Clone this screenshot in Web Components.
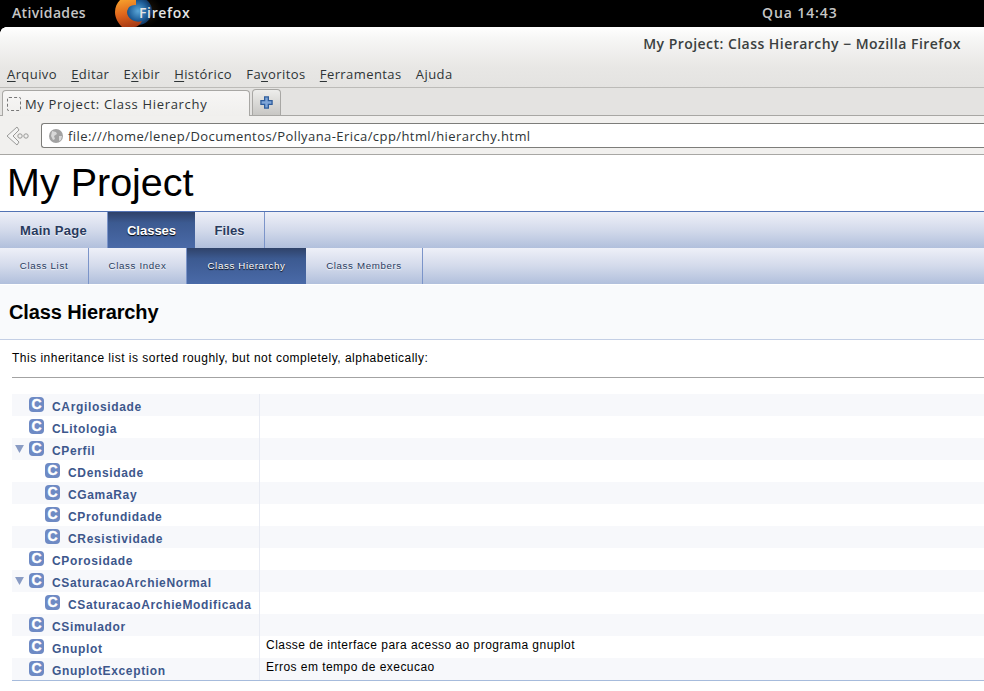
<!DOCTYPE html>
<html><head><meta charset="utf-8"><title>My Project: Class Hierarchy</title>
<style>
html,body{margin:0;padding:0;height:691px;overflow:hidden;background:#fff}
body{font-family:"Liberation Sans",Arial,sans-serif}
</style></head><body>
<gnome-bar></gnome-bar>
<ff-chrome></ff-chrome>
<doxy-page></doxy-page>
<script>
function el(name,html,cls){customElements.define(name,class extends HTMLElement{constructor(){super();this.attachShadow({mode:'open'}).innerHTML=html;}
connectedCallback(){if(cls)cls.call(this)}});}
const ui='"Open Sans","Noto Sans",sans-serif';
el('gnome-bar',`<style>
:host{display:flex;height:27px;background:#000;color:#c6c6c6;font:600 14px ${ui};align-items:center;position:relative;overflow:hidden}
.a{margin-left:12px;width:102px;letter-spacing:.35px;margin-top:-1px}
.logo{width:52px;height:27px;position:relative;flex:none}
svg{position:absolute;left:-2px;top:-13px}
.glow{position:absolute;left:30px;top:0;width:18px;height:27px;background:radial-gradient(ellipse at 0 40%,rgba(70,50,20,.5),transparent 70%)}
.f{position:absolute;left:25px;top:4px;color:#e4e4e4;letter-spacing:.65px}
.c{position:absolute;left:762px;top:4px;letter-spacing:.9px}
.a,.f,.c{line-height:18px}
</style><span class="a">Atividades</span><span class="logo"><span class="glow"></span><svg width="42" height="40" viewBox="0 0 42 40"><defs><radialGradient id="g" cx=".5" cy=".5" r=".55"><stop offset="0" stop-color="#5aa6d8"/><stop offset=".6" stop-color="#1f5f9a"/><stop offset="1" stop-color="#0c2a50"/></radialGradient><linearGradient id="o" x1=".3" y1="0" x2=".5" y2="1"><stop offset="0" stop-color="#f8a52e"/><stop offset=".55" stop-color="#e0651c"/><stop offset="1" stop-color="#a83a14"/></linearGradient></defs><circle cx="26" cy="24" r="14" fill="url(#g)"/><path d="M8 13C12 10 19 10 24 13L24 18C20 18 17 19 16 22 14 25 15 30 20 33 24 35 27 35 30 34 28 38 25 40 22 40L10 40C6 36 3 31 3 25 3 20 5 16 8 13z" fill="url(#o)"/></svg><span class="f">Firefox</span></span><span class="c">Qua 14:43</span>`);

el('ff-chrome',`<style>
:host{display:block;height:128px;background:#e6e5e3;font:13px ${ui};color:#2e3436;position:relative;overflow:hidden}
.win{height:60px;border-bottom:1px solid #bcbbb8;background:linear-gradient(#fff 0,#f6f6f5 12px,#e8e7e5 40px,#e4e3e1 60px);position:relative}
.corner{position:absolute;left:0;top:0;width:6px;height:6px;background:radial-gradient(circle at 100% 100%,transparent 5.5px,#000 6px)}
.title{display:flex;justify-content:flex-end;padding:8px 23px 0 0;font:600 14px ${ui};line-height:18px;color:#3b3f40;letter-spacing:.46px}
.menu{display:flex;position:absolute;left:7px;top:38px;gap:14.2px;line-height:18px;font-size:13px;letter-spacing:.42px}
u{text-underline-offset:2px}
.tabs{height:27px;border-bottom:1px solid #a8a7a4;background:#e4e3e1;display:flex;align-items:flex-end;padding-left:2px;gap:2px}
.tab{width:248px;height:26px;box-sizing:border-box;background:linear-gradient(#f7f6f5,#f0efed);border:1px solid #a8a7a4;border-bottom:0;border-radius:4px 4px 0 0;display:flex;align-items:center;padding-left:4px;letter-spacing:.68px;margin-bottom:-1px;position:relative}
.fav{width:14px;height:14px;border:1px dashed #777;border-radius:2px;box-sizing:border-box;margin-right:4px;flex:none}
.new{width:29px;height:26px;box-sizing:border-box;background:linear-gradient(#ededeb,#c8c7c4);border:1px solid #a8a7a4;border-bottom:0;border-radius:4px 4px 0 0;display:flex;align-items:center;justify-content:center}
.nav{height:39px;background:#f1f0ee;position:relative;display:flex;align-items:center;padding-left:5px;box-sizing:border-box}
.url{position:absolute;left:41px;right:-4px;top:7px;height:25px;box-sizing:border-box;border:1px solid #7d7d7a;border-right:0;border-radius:3px 0 0 3px;background:#fff;display:flex;align-items:center;padding-left:6px;letter-spacing:.42px}
.url svg{margin-right:4px;flex:none}
.bot{position:absolute;left:0;right:0;bottom:0;height:1px;background:#a8a7a4}
</style>
<div class="win"><div class="corner"></div><div class="title">My Project: Class Hierarchy − Mozilla Firefox</div>
<div class="menu"><span><u>A</u>rquivo</span><span><u>E</u>ditar</span><span>E<u>x</u>ibir</span><span><u>H</u>istórico</span><span>Fa<u>v</u>oritos</span><span><u>F</u>erramentas</span><span>A<u>j</u>uda</span></div></div>
<div class="tabs"><div class="tab"><span class="fav"></span>My Project: Class Hierarchy</div><div class="new"><svg width="13" height="13" viewBox="0 0 14 14"><path d="M5 1h4v4h4v4H9v4H5V9H1V5h4z" fill="#7fa6d8" stroke="#2f5d9c" stroke-width="1.4"/></svg></div></div>
<div class="nav"><svg width="26" height="24" viewBox="0 0 26 24"><path d="M12 3 2 12l10 9 2-3-6-6 6-6z" fill="#f4f4f3" stroke="#9a9a98" stroke-width="1"/><circle cx="15" cy="12" r="2.200" fill="none" stroke="#9a9a98"/><circle cx="21" cy="12" r="2.200" fill="none" stroke="#9a9a98"/></svg>
<div class="url"><svg width="16" height="16" viewBox="0 0 16 16"><circle cx="8" cy="8" r="7" fill="#a2a2a2"/><path d="M4 3l4 1 1 2-3 2 1 3-2 1-2-4zM11 8l3 0-1 4-2 1z" fill="#d8d8d8"/></svg><span>file:///home/lenep/Documentos/Pollyana-Erica/cpp/html/hierarchy.html</span></div><div class="bot"></div></div>`);

el('nav-tabs',`<style>
:host{display:flex;height:36px;background:linear-gradient(#eef0f8,#d3daeb 50%,#b1bfdc);font:var(--w,bold) var(--fs,13px) "Liberation Sans",sans-serif;}
</style><slot></slot>`);
el('nav-tab',`<style>
:host{display:flex;align-items:center;justify-content:center;height:36px;box-sizing:border-box;border-right:1px solid #7b94c9;color:#283a5d;text-shadow:0 1px 1px rgba(255,255,255,.9);letter-spacing:var(--ls,.65px);width:var(--tw);padding-bottom:var(--pb,0)}
:host([on]){background:linear-gradient(#2f4269,#3c5a91 30%,#4a6aa8);color:#fff;text-shadow:0 1px 1px #000;border-right:0}
</style><slot></slot>`);
el('class-row',`<style>
:host{display:flex;height:22px;background:#fff;font:12px "Liberation Sans",sans-serif}
:host([alt]){background:#f7f8fb}
.l{width:247px;border-right:1px solid #e8ebf3;display:flex;align-items:center;flex:none;position:relative}
.ar{width:17px;flex:none;display:flex;justify-content:center;position:relative;left:-1px;top:0}
.ic{width:15px;height:15px;border-radius:4px;background:#6e8ac4;color:#fff;font:bold 14px/15px "Liberation Sans",sans-serif;-webkit-text-stroke:.4px #fff;text-align:center;flex:none;margin-right:8px;align-self:flex-start;margin-top:3px}
a{font:bold 12px "Liberation Sans",sans-serif;color:#3d578c;letter-spacing:.65px;white-space:nowrap;position:relative;top:2px}
.d{padding-left:6px;color:#000;line-height:18px;letter-spacing:.46px;white-space:nowrap}
</style><div class="l"><span class="ar" id="ar"></span><span class="ic">C</span><a></a></div><div class="d"></div>`,function(){
const r=this.shadowRoot,lvl=+this.getAttribute('level')||0;
r.querySelector('a').textContent=this.getAttribute('name');
r.querySelector('.d').textContent=this.getAttribute('desc')||'';
const ar=r.getElementById('ar');ar.style.marginLeft=lvl?'33px':'0';
if(lvl)ar.style.width='0';
if(this.hasAttribute('open'))ar.innerHTML='<svg width="9" height="8" viewBox="0 0 10 9" style="display:block"><path d="M0 0h10L5 9z" fill="#8a9cc4"/></svg>';
});
el('doxy-page',`<style>
:host{display:block;background:#fff;color:#000}
.proj{height:56px;font:39.500px/55px "Liberation Sans",sans-serif;padding-left:7px;border-bottom:1px solid #5373b4}
.t1{--fs:13px;--w:bold}
.t2{--fs:9.700px;--w:normal;--pb:2px}
.hd{background:#f9fafc;border-top:1px solid #fff;border-bottom:1px solid #c4cfe5;height:54px;font:bold 20px/54px "Liberation Sans",sans-serif;padding-left:9px;letter-spacing:-.12px}
.txt{font:12px/18px "Liberation Sans",sans-serif;padding:9px 0 0 12px;height:28px;letter-spacing:.49px}
.rule{height:1px;background:#a3a3a3;margin-left:12px}
.tbl{margin:16px 0 0 12px;border-bottom:1px solid #a6bbdc}
</style>
<div class="proj">My Project</div>
<nav-tabs class="t1"><nav-tab style="--tw:108px;--ls:.3px">Main Page</nav-tab><nav-tab on style="--tw:87px;--ls:0">Classes</nav-tab><nav-tab style="--tw:70px;--ls:.1px">Files</nav-tab></nav-tabs>
<nav-tabs class="t2"><nav-tab style="--tw:89px">Class List</nav-tab><nav-tab style="--tw:98px">Class Index</nav-tab><nav-tab on style="--tw:119px">Class Hierarchy</nav-tab><nav-tab style="--tw:117px">Class Members</nav-tab></nav-tabs>
<div class="hd">Class Hierarchy</div>
<div class="txt">This inheritance list is sorted roughly, but not completely, alphabetically:</div>
<div class="rule"></div>
<div class="tbl">
<class-row alt name="CArgilosidade"></class-row>
<class-row name="CLitologia"></class-row>
<class-row alt open name="CPerfil"></class-row>
<class-row level="1" name="CDensidade"></class-row>
<class-row alt level="1" name="CGamaRay"></class-row>
<class-row level="1" name="CProfundidade"></class-row>
<class-row alt level="1" name="CResistividade"></class-row>
<class-row name="CPorosidade"></class-row>
<class-row alt open name="CSaturacaoArchieNormal"></class-row>
<class-row level="1" name="CSaturacaoArchieModificada"></class-row>
<class-row alt name="CSimulador"></class-row>
<class-row name="Gnuplot" desc="Classe de interface para acesso ao programa gnuplot"></class-row>
<class-row alt name="GnuplotException" desc="Erros em tempo de execucao"></class-row>
</div>`);
</script>
</body></html>
